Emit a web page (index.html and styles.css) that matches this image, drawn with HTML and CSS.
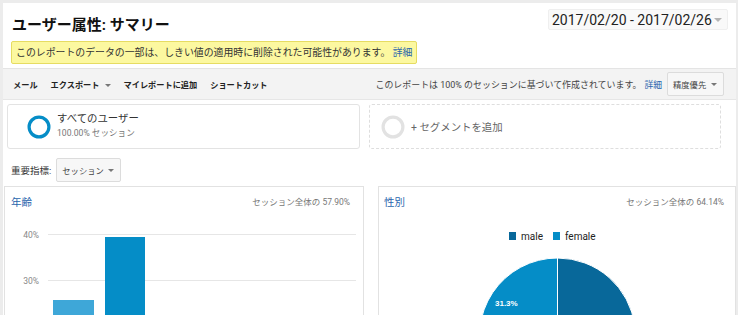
FILE: index.html
```html
<!DOCTYPE html>
<html lang="ja">
<head>
<meta charset="utf-8">
<title>ユーザー属性: サマリー</title>
<link rel="stylesheet" href="styles.css">
</head>
<body>
<div class="page">
  <header class="header">
    <div class="header-left">
      <h1 class="title">ユーザー属性: サマリー</h1>
      <div class="notice">このレポートのデータの一部は、しきい値の適用時に削除された可能性があります。 <a class="link">詳細</a></div>
    </div>
    <div class="datepicker">
      <span class="date-text">2017/02/20 - 2017/02/26</span>
      <span class="caret caret-light"></span>
    </div>
  </header>

  <nav class="toolbar">
    <div class="tools">
      <span class="tool">メール</span>
      <span class="tool">エクスポート <span class="caret caret-small"></span></span>
      <span class="tool">マイレポートに追加</span>
      <span class="tool">ショートカット</span>
    </div>
    <div class="tools-right">
      <span class="sample-text">このレポートは 100% のセッションに基づいて作成されています。</span>
      <a class="link sample-link">詳細</a>
      <span class="btn">精度優先 <span class="caret caret-small"></span></span>
    </div>
  </nav>

  <section class="segments">
    <div class="segment">
      <svg class="ring" width="24" height="24" viewBox="0 0 24 24"><circle cx="12" cy="12" r="9.9" fill="none" stroke="#058dc7" stroke-width="3.2"/></svg>
      <div class="segment-text">
        <div class="segment-name">すべてのユーザー</div>
        <div class="segment-sub">100.00% セッション</div>
      </div>
    </div>
    <div class="segment segment-add">
      <svg class="ring" width="24" height="24" viewBox="0 0 24 24"><circle cx="12" cy="12" r="9.9" fill="none" stroke="#e2e2e2" stroke-width="3.2"/></svg>
      <div class="segment-add-text">+ セグメントを追加</div>
    </div>
  </section>

  <div class="metric">
    <span class="metric-label">重要指標:</span>
    <span class="select">セッション <span class="caret caret-small"></span></span>
  </div>

  <section class="charts">
    <div class="panel">
      <div class="panel-head">
        <span class="panel-title">年齢</span>
        <span class="panel-share">セッション全体の 57.90%</span>
      </div>
      <svg class="chart" width="358" height="110" viewBox="0 0 358 110">
        <line x1="43" y1="23.5" x2="351" y2="23.5" stroke="#e6e6e6" stroke-width="1"/>
        <line x1="43" y1="69.5" x2="351" y2="69.5" stroke="#e6e6e6" stroke-width="1"/>
        <text x="34" y="26.5" class="axis" text-anchor="end">40%</text>
        <text x="34" y="72.5" class="axis" text-anchor="end">30%</text>
        <rect x="48" y="89" width="41" height="30" fill="#3ea7d8"/>
        <rect x="100" y="26" width="40" height="90" fill="#058dc7"/>
      </svg>
    </div>
    <div class="panel">
      <div class="panel-head">
        <span class="panel-title">性別</span>
        <span class="panel-share">セッション全体の 64.14%</span>
      </div>
      <svg class="chart" width="356" height="110" viewBox="0 0 356 110">
        <rect x="130" y="21" width="7" height="8" fill="#08689a"/>
        <text x="142" y="29" class="legend">male</text>
        <rect x="174" y="21" width="7" height="8" fill="#058dc7"/>
        <text x="186" y="29" class="legend">female</text>
        <path d="M178.5 125 L178.5 47 A78 78 0 1 1 106.53 155.07 Z" fill="#08689a" stroke="#ffffff" stroke-width="1"/>
        <path d="M178.5 125 L178.5 47 A78 78 0 0 0 106.53 155.07 Z" fill="#058dc7" stroke="#ffffff" stroke-width="1"/>
        <text x="116" y="95" class="pie-label">31.3%</text>
      </svg>
    </div>
  </section>
</div>
</body>
</html>
```

FILE: styles.css
```css
* { box-sizing: border-box; }

body {
  margin: 0;
  background: #ececec;
  font-family: Roboto, "Noto Sans CJK JP", sans-serif;
  color: #333;
}

.page {
  margin: 3px 2px 0 3px;
  width: 733px;
  height: 312px;
  overflow: hidden;
  background: #ffffff;
}

.link {
  color: #2a66ad;
  text-decoration: none;
}

/* Header */
.header {
  display: flex;
  justify-content: space-between;
  align-items: flex-start;
  padding: 6px 8px 4px 8px;
  border-bottom: 1px solid #e4e4e4;
}

.header-left {
  display: flex;
  flex-direction: column;
  align-items: flex-start;
  gap: 5px;
  margin-top: 5px;
}

.title {
  margin: 0;
  padding-left: 1px;
  font-size: 15px;
  line-height: 22px;
  font-weight: bold;
  color: #111;
}

.notice {
  height: 23px;
  padding: 0 4px;
  line-height: 21px;
  font-size: 9.9px;
  color: #333;
  background: #fcf8a0;
  border: 1px solid #e6dc62;
  border-radius: 2px;
  white-space: nowrap;
}

.datepicker {
  display: flex;
  align-items: center;
  justify-content: space-between;
  width: 180px;
  height: 21px;
  padding: 0 5px 0 3px;
  background: #f9f9f9;
  border: 1px solid #efefef;
  border-radius: 2px;
}

.date-text {
  font-family: Roboto, sans-serif;
  font-size: 14px;
  color: #222;
  white-space: nowrap;
}

.caret {
  display: inline-block;
  width: 0;
  height: 0;
  border-left: 4px solid transparent;
  border-right: 4px solid transparent;
  border-top: 4px solid #b5b5b5;
}

.caret-small {
  border-left-width: 3px;
  border-right-width: 3px;
  border-top: 3px solid #777;
  vertical-align: middle;
  margin-left: 3px;
}

/* Toolbar */
.toolbar {
  display: flex;
  align-items: center;
  justify-content: space-between;
  height: 31px;
  padding: 0 12px 0 10px;
  background: #f3f3f3;
  border-bottom: 1px solid #e6e6e6;
}

.tools {
  display: flex;
  gap: 13px;
}

.tool {
  font-size: 8.2px;
  font-weight: bold;
  color: #222;
  white-space: nowrap;
}

.tools-right {
  display: flex;
  align-items: center;
}

.sample-text {
  font-size: 8.95px;
  color: #444;
  white-space: nowrap;
}

.sample-link {
  font-size: 8.8px;
  margin-left: 3px;
}

.btn {
  display: flex;
  align-items: center;
  justify-content: space-between;
  width: 57px;
  height: 24px;
  margin-left: 5px;
  padding: 0 6px 0 5px;
  font-size: 8.3px;
  color: #444;
  background: #f7f7f7;
  border: 1px solid #dcdcdc;
  border-radius: 2px;
}

/* Segments */
.segments {
  display: flex;
  gap: 9px;
  padding: 4px 0 0 4px;
}

.segment {
  display: flex;
  align-items: center;
  width: 353px;
  height: 45px;
  padding-left: 19px;
  gap: 6px;
  border: 1px solid #e3e3e3;
  border-radius: 3px;
}

.segment-add {
  width: 352px;
  padding-left: 11px;
  border: 1px dashed #dedede;
}

.ring { display: block; flex: none; }

.segment-text {
  display: flex;
  flex-direction: column;
  gap: 1px;
  margin-top: -2px;
}

.segment-name {
  font-size: 10.4px;
  line-height: 14px;
  color: #333;
}

.segment-sub {
  font-size: 8.6px;
  line-height: 12px;
  color: #777;
}

.segment-add-text {
  font-size: 10.4px;
  color: #666;
}

/* Metric selector */
.metric {
  display: flex;
  align-items: center;
  gap: 5px;
  padding: 9px 0 0 8px;
}

.metric-label {
  font-size: 9.5px;
  color: #333;
}

.select {
  display: flex;
  align-items: center;
  justify-content: space-between;
  width: 65px;
  height: 24px;
  padding: 0 6px 0 5px;
  font-size: 8.3px;
  color: #444;
  background: #f7f7f7;
  border: 1px solid #dcdcdc;
  border-radius: 2px;
}

/* Charts */
.charts {
  display: grid;
  grid-template-columns: 360px 358px;
  gap: 14px;
  margin: 4px 0 0 1px;
}

.panel {
  height: 200px;
  border: 1px solid #e2e2e2;
  border-bottom: none;
}

.panel-head {
  display: flex;
  justify-content: space-between;
  align-items: center;
  height: 24px;
  padding: 4px 12px 0 6px;
}

.panel:first-child .panel-head { padding-right: 13px; }
.panel:last-child .panel-head { padding-left: 5px; padding-right: 11px; }

.panel-title {
  font-size: 10.5px;
  color: #2a66ad;
}

.panel-share {
  font-size: 8.5px;
  color: #777;
  white-space: nowrap;
}

.chart { display: block; }

.axis {
  font-family: Roboto, sans-serif;
  font-size: 8.5px;
  fill: #888;
}

.legend {
  font-family: Roboto, sans-serif;
  font-size: 10px;
  fill: #222;
}

.pie-label {
  font-family: "Liberation Sans", sans-serif;
  font-size: 8px;
  font-weight: bold;
  fill: #ffffff;
}
```
